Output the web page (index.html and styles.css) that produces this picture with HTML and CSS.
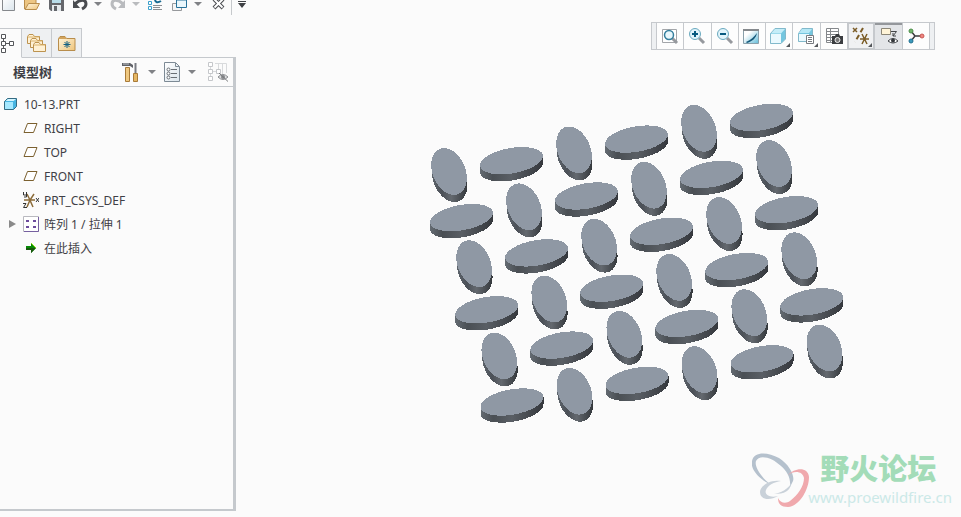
FILE: index.html
```html
<!DOCTYPE html>
<html lang="zh-CN">
<head>
    <meta charset="UTF-8">
    <meta name="viewport" content="width=device-width, initial-scale=1.0">
    <title>10-13.PRT</title>
    <link rel="stylesheet" href="styles.css">
</head>
<body>
    <div class="app">
        <header class="quickbar">
            <button class="tool" aria-label="新建"><svg width="16" height="12" viewBox="0 0 16 12"><defs><linearGradient id="paper" x2="1" y2="1"><stop offset="0" stop-color="#fff"/><stop offset="1" stop-color="#dbe5ec"/></linearGradient></defs><path d="M2.500-2V10.500H14.500V-2" fill="url(#paper)" stroke="#85888c"/></svg></button>
            <button class="tool" aria-label="打开"><svg width="16" height="12" viewBox="0 0 16 12"><defs><linearGradient id="folder" x2="1" y2="1"><stop offset="0" stop-color="#fff6df"/><stop offset="1" stop-color="#efc57c"/></linearGradient></defs><path d="M.5 9V-2H12V3" fill="#edc683" stroke="#b88d4c"/><path d="M1 9.500L4.500 3.500H15.500L12.500 9.500Z" fill="url(#folder)" stroke="#b88d4c"/></svg></button>
            <button class="tool" aria-label="保存"><svg width="16" height="12" viewBox="0 0 16 12"><path d="M1-2H16V11H3L1 9Z" fill="#65676c"/><path d="M4-1H13V3H4Z" fill="#b8dce9"/><path d="M4 5H13V11H4Z" fill="#e5e9ed"/><path d="M6 6H9V11H6Z" fill="#63666b"/></svg></button>
            <button class="tool" aria-label="撤消"><svg width="16" height="12" viewBox="0 0 16 12"><path d="M3 4C8-1 14-1 14 4C14 7 12 8 10 9" fill="none" stroke="#4a4c50" stroke-width="3"/><path d="M1 0V8H8Z" fill="#4a4c50"/></svg></button>
            <button class="drop" aria-label="撤消列表"><svg width="8" height="4"><path d="M0 0H8L4 4Z"/></svg></button>
            <button class="tool" aria-label="重做"><svg width="16" height="12" viewBox="0 0 16 12"><path d="M13 4C8-1 2-1 2 4C2 7 4 8 6 9" fill="none" stroke="#b9bbbe" stroke-width="3"/><path d="M15 0V8H8Z" fill="#b9bbbe"/></svg></button>
            <button class="drop drop-off" aria-label="重做列表"><svg width="8" height="4"><path d="M0 0H8L4 4Z"/></svg></button>
            <button class="tool" aria-label="重新生成"><svg width="16" height="12" viewBox="0 0 16 12"><path d="M.5 1.500H3.500V4.500H.5ZM.5 6.500H3.500V9.500H.5Z" fill="#fff" stroke="#3aa0cc"/><path d="M5 5.500H14M5 9.500H14M5 7.500H12" stroke="#8b8e92"/><path d="M7-1C7 3 10 3 13 1" fill="none" stroke="#196b92" stroke-width="2"/></svg></button>
            <button class="tool" aria-label="窗口"><svg width="16" height="12" viewBox="0 0 16 12"><path d="M.5 3.500H9.500V10.500H.5Z" fill="#f5f5f5" stroke="#97999c"/><path d="M4.500-2H14.500V7.500H4.500Z" fill="#eaf7fc" stroke="#28729a" stroke-width="1"/><path d="M4 0H15" stroke="#28729a"/></svg></button>
            <button class="drop" aria-label="窗口列表"><svg width="8" height="4"><path d="M0 0H8L4 4Z"/></svg></button>
            <button class="tool" aria-label="关闭"><svg width="16" height="12" viewBox="0 0 16 12"><path d="M4-1L13 8M13-1L4 8" stroke="#4a4c50" stroke-width="4"/><path d="M4-1L12.500 7.500M13-1L4.500 7.500" stroke="#fff" stroke-width="2"/></svg></button>
            <span class="divider"></span>
            <button class="drop drop-more" aria-label="自定义"><svg width="8" height="7"><path d="M0 0H8V1H0ZM0 2H8L4 7Z"/></svg></button>
        </header>

        <main class="workspace">
            <aside class="navigator">
                <div class="tabs">
                    <button class="tab active" aria-label="模型树"><svg width="14" height="20" viewBox="0 0 14 20"><path d="M3.500 5V15M3 10.500H9" stroke="#55575a" fill="none"/><path d="M1.500 1.500H5.500V5.500H1.500ZM1.500 8.500H5.500V12.500H1.500ZM1.500 15.500H5.500V19.500H1.500ZM9.500 8.500H13.500V12.500H9.500Z" fill="#fff" stroke="#55575a"/></svg></button>
                    <button class="tab" aria-label="文件夹浏览器"><svg width="20" height="20" viewBox="0 0 20 20"><defs><g id="fold"><path d="M.5 9.500V2.500L2 .5H6L7.500 2.500H12.500V9.500Z" fill="#fff1d4" stroke="#bd934f"/><path d="M1 3H12" stroke="#dcb46c"/></g></defs><use href="#fold" x="0" y="1"/><use href="#fold" x="3" y="5"/><use href="#fold" x="6" y="9"/></svg></button>
                    <button class="tab" aria-label="收藏夹"><svg width="18" height="18" viewBox="0 0 18 18"><path d="M.5 16.500V4.500L2 2.500H7L8.500 4.500H17V16.500Z" fill="url(#folder)" stroke="#b88d4c"/><path d="M1 4H8" stroke="#d1a35c" stroke-width="2"/><path d="M9 7V14M5.500 10.500H12.500M6.500 8L11.500 13M11.500 8L6.500 13" stroke="#136184"/></svg></button>
                </div>
                <section class="panel">
                    <div class="panel-head">
                        <h1>模型树</h1>
                        <div class="panel-tools">
                            <button class="wide" aria-label="设置"><svg width="18" height="20" viewBox="0 0 18 20"><path d="M0 1H8L11 3V6L8 4H0Z" fill="#606268"/><path d="M1 2H7" stroke="#c1c5ca"/><path d="M3.500 5.500H7.500V19.500H3.500Z" fill="#efc880" stroke="#a97b38"/><path d="M13.500 1V11" stroke="#787b82" stroke-width="2"/><path d="M11.500 11.500H15.500V19.500H11.500Z" fill="#e5b765" stroke="#a97b38"/></svg></button>
                            <button class="drop" aria-label="设置列表"><svg width="8" height="4"><path d="M0 0H8L4 4Z"/></svg></button>
                            <button class="tool" aria-label="显示"><svg width="16" height="20" viewBox="0 0 16 20"><path d="M.5.5H11.500L15.500 4.500V19.500H.5Z" fill="url(#paper)" stroke="#7d8a95"/><path d="M11.500 1V4.500H15" fill="none" stroke="#7d8a95"/><path d="M7 7.500H13M7 11.500H13M7 15.500H13" stroke="#696f75"/><g fill="#fff" stroke="#696f75"><circle cx="4.500" cy="7.500" r="1.500"/><circle cx="4.500" cy="11.500" r="1.500"/><circle cx="4.500" cy="15.500" r="1.500"/></g></svg></button>
                            <button class="drop" aria-label="显示列表"><svg width="8" height="4"><path d="M0 0H8L4 4Z"/></svg></button>
                            <button class="wide last" aria-label="隐藏项"><svg width="21" height="20" viewBox="0 0 21 20"><path d="M2.500 5V15M3 9.500H8M7 1.500H18.500V11M10.500 2V7M14.500 2V12" fill="none" stroke="#d8dadc"/><path d="M.5.5H4.500V4.500H.5ZM.5 7.500H4.500V11.500H.5ZM.5 14.500H4.500V18.500H.5ZM8.500 7.500H12.500V11.500H8.500Z" fill="#fff" stroke="#c5c7ca"/><path d="M10 15Q15 10 20 15Q15 20 10 15Z" fill="#dcdddf" stroke="#8b8d90"/><circle cx="15" cy="15" r="2" fill="#85878a"/><path d="M11 11L20 19.500" stroke="#77797c"/></svg></button>
                        </div>
                    </div>
                    <ul class="tree">
                        <li>
                            <div class="node root"><svg width="16" height="16" viewBox="0 0 16 16"><path d="M1.500 5.500L4.500 2.500H13.500V10.500L10.500 13.500H1.500Z" fill="#47b5e2" stroke="#356b82"/><path d="M2 6H10V13H2Z" fill="#a5e8ff"/><path d="M2.500 5L5 3H13L10.500 5Z" fill="#d4f5ff"/></svg><span>10-13.PRT</span></div>
                            <ul>
                                <li class="node"><svg width="16" height="16" viewBox="0 0 16 16"><path d="M4.500 3.500H14L10.500 12.500H1Z" fill="#fff" stroke="#7b602f"/></svg><span>RIGHT</span></li>
                                <li class="node"><svg width="16" height="16" viewBox="0 0 16 16"><path d="M4.500 3.500H14L10.500 12.500H1Z" fill="#fff" stroke="#7b602f"/></svg><span>TOP</span></li>
                                <li class="node"><svg width="16" height="16" viewBox="0 0 16 16"><path d="M4.500 3.500H14L10.500 12.500H1Z" fill="#fff" stroke="#7b602f"/></svg><span>FRONT</span></li>
                                <li class="node"><svg width="16" height="16" viewBox="0 0 16 16"><path d="M1 8H12M4 2L6 6L10 15M11 2L7 8L4 15" fill="none" stroke="#8b6b39" stroke-width="1.500"/><path d="M.5 0V3H3M3.500 0V5H1M0 11.500H3L.5 15.500H4M13 6L16 10M16 6L13 10" fill="none" stroke="#343434"/></svg><span>PRT_CSYS_DEF</span></li>
                                <li class="node expandable"><button class="toggle" aria-label="展开"><svg width="8" height="10"><path d="M1 1L8 5L1 9Z"/></svg></button><svg width="16" height="16" viewBox="0 0 16 16"><path d="M.5.5H15.500V15.500H.5Z" fill="#fff" stroke="#b9b9bf"/><path d="M1 15.500H15.500V1" fill="none" stroke="#7660a0"/><path d="M3 4H6V6H3ZM10 4H13V6H10ZM3 10H6V12H3ZM10 10H13V12H10Z" fill="#6c4b9c"/></svg><span>阵列 1 / 拉伸 1</span></li>
                                <li class="node"><svg width="16" height="16" viewBox="0 0 16 16"><path d="M3 6H8V3L13 8L8 13V10H3Z" fill="#078a07"/><path d="M3 8H13L8 13V10H3Z" fill="#17570d"/><path d="M8 3L13 8" stroke="#8bd914"/></svg><span>在此插入</span></li>
                            </ul>
                        </li>
                    </ul>
                </section>
            </aside>

            <section class="viewport">
                <svg class="model" width="420" height="325" viewBox="0 0 420 325" role="img" aria-label="阵列">
                    <defs>
                        <linearGradient id="sideTall"><stop offset="0" stop-color="#5f666e"/><stop offset=".3" stop-color="#4b5057"/><stop offset=".55" stop-color="#64696f"/><stop offset="1" stop-color="#34383c"/></linearGradient>
                        <linearGradient id="sideFlat"><stop offset="0" stop-color="#646b72"/><stop offset=".2" stop-color="#4a4f54"/><stop offset=".5" stop-color="#5a5f65"/><stop offset="1" stop-color="#35383d"/></linearGradient>
                        <g id="tall">
                            <path d="M-17.850-6.500L-17.200.6A24.400 16.400 67.300 0 0 18.500 13.600L17.850 6.500Z" fill="url(#sideTall)"/>
                            <ellipse rx="24.400" ry="16.400" transform="rotate(67.300)" fill="#8f98a4"/>
                        </g>
                        <g id="flat">
                            <path d="M-31.500 4.650V11.650A31.900 12.700-10 0 0 31.500 2.350V-4.650Z" fill="url(#sideFlat)"/>
                            <ellipse rx="31.900" ry="12.700" transform="rotate(-10)" fill="#8f98a4"/>
                        </g>
                        <g id="oddRow">
                            <use href="#tall"/>
                            <use href="#flat" x="62.500" y="-10.800"/>
                            <use href="#tall" x="125" y="-21.600"/>
                            <use href="#flat" x="187.500" y="-32.400"/>
                            <use href="#tall" x="250" y="-43.200"/>
                            <use href="#flat" x="312.500" y="-54"/>
                        </g>
                        <g id="evenRow">
                            <use href="#flat"/>
                            <use href="#tall" x="62.500" y="-10.800"/>
                            <use href="#flat" x="125" y="-21.600"/>
                            <use href="#tall" x="187.500" y="-32.400"/>
                            <use href="#flat" x="250" y="-43.200"/>
                            <use href="#tall" x="312.500" y="-54"/>
                        </g>
                    </defs>
                    <g shape-rendering="crispEdges">
                        <use href="#oddRow" x="21" y="71.500"/>
                        <use href="#evenRow" x="33.500" y="117.600"/>
                        <use href="#oddRow" x="46.100" y="163.700"/>
                        <use href="#evenRow" x="58.700" y="209.800"/>
                        <use href="#oddRow" x="71.300" y="255.900"/>
                        <use href="#evenRow" x="84" y="302"/>
                    </g>
                </svg>

                <div class="viewbar">
                    <span class="grip"></span>
                    <button aria-label="重新调整"><svg width="18" height="18" viewBox="0 0 18 18"><path d="M1.500 2.500H15.500V15.500H1.500Z" fill="#fff" stroke="#a3a6aa"/><path d="M11 11L16 16" stroke="#96999e" stroke-width="3"/><circle cx="8" cy="8" r="4.500" fill="#e8f7fc" stroke="#357f9e" stroke-width="1.500"/></svg></button>
                    <button aria-label="放大"><svg width="18" height="18" viewBox="0 0 18 18"><path d="M11 11L16 16" stroke="#96999e" stroke-width="3"/><circle cx="7" cy="7" r="5.500" fill="#e1f4fb" stroke="#6aa9bf"/><path d="M4 7H10M7 4V10" stroke="#075a80" stroke-width="2"/></svg></button>
                    <button aria-label="缩小"><svg width="18" height="18" viewBox="0 0 18 18"><path d="M11 11L16 16" stroke="#96999e" stroke-width="3"/><circle cx="7" cy="7" r="5.500" fill="#e1f4fb" stroke="#6aa9bf"/><path d="M4 7H10" stroke="#075a80" stroke-width="2"/></svg></button>
                    <button aria-label="重画"><svg width="18" height="18" viewBox="0 0 18 18"><defs><linearGradient id="sky" x2="1" y2="1"><stop offset=".3" stop-color="#fff"/><stop offset="1" stop-color="#63bcd9"/></linearGradient></defs><path d="M.5 2.500H15.500V16.500H.5Z" fill="url(#sky)" stroke="#8aa0ab"/><path d="M0 3H16" stroke="#85898d" stroke-width="2"/><path d="M14 6C13 11 10 14 4 16L3 15C8 13 11 10 14 6Z" fill="#15597a"/></svg></button>
                    <button class="menu" aria-label="显示样式"><svg width="18" height="18" viewBox="0 0 18 18"><path d="M.5 6.500L5 1.500H15.500V12L11 16.500H.5Z" fill="#74c6df" stroke="#82b9cb"/><path d="M1 7H11V16H1Z" fill="#eaf9fe"/><path d="M1 6.500L5 2H15L11 6.500Z" fill="#c4edf8"/></svg></button>
                    <button class="menu" aria-label="已保存方向"><svg width="18" height="18" viewBox="0 0 18 18"><path d="M.5 6.500L4 1.500H14.500V12L11 14.500H.5Z" fill="#74c6df" stroke="#82b9cb"/><path d="M1 7H11V14H1Z" fill="#eaf9fe"/><path d="M1 6L4 2H14L11 6Z" fill="#b5e8f6"/><path d="M8.500 8.500H15.500V16.500H8.500Z" fill="#fff" stroke="#777b80"/><path d="M10 10.500H14M10 12.500H14M10 14.500H14" stroke="#777b80"/></svg></button>
                    <button aria-label="视图管理器"><svg width="18" height="18" viewBox="0 0 18 18"><path d="M1.500 1.500H13.500V15.500H1.500Z" fill="#fff" stroke="#85888c"/><path d="M1 4.500H13M1 7.500H13M1 10.500H13M1 13.500H13M5.500 2V15" stroke="#85888c"/><path d="M7 9H10L11 7H14L15 9H18V17H7Z" fill="#3b3d40"/><circle cx="12.500" cy="13" r="2.500" fill="#777" stroke="#f0f0f0"/></svg></button>
                    <button class="menu pressed" aria-label="基准显示"><svg width="18" height="18" viewBox="0 0 18 18"><path d="M1 1L5 5M5 1L1 5" stroke="#7b5c27" stroke-width="1.500"/><path d="M11 1L3 15" stroke="#7b5c27" stroke-width="2" stroke-dasharray="5 3"/><path d="M8 12H17M10 7L15 17M15 7L10 17" stroke="#7b5c27" stroke-width="1.500"/></svg></button>
                    <button class="pressed dark" aria-label="注释显示"><svg width="18" height="18" viewBox="0 0 18 18"><path d="M1.500 1.500H10.500V7.500H1.500Z" fill="#fff4d8" stroke="#8b8677"/><path d="M11 4.500H16.500L13 9M13 6V9H16" fill="none" stroke="#444649"/><path d="M8 14Q13 9 18 14Q13 18 8 14Z" fill="#fff" stroke="#3f4246"/><circle cx="13" cy="13.500" r="2" fill="#33363a"/></svg></button>
                    <button aria-label="旋转中心"><svg width="18" height="18" viewBox="0 0 18 18"><path d="M4 4L8 9L4 14M8 9H14" fill="none" stroke="#393b3e" stroke-width="1.500"/><circle cx="4" cy="4" r="2" fill="#72b56c" stroke="#4c8e49"/><circle cx="4" cy="14" r="2" fill="#3c9abc" stroke="#206f90"/><circle cx="15" cy="9" r="2" fill="#ee8580" stroke="#c85752"/></svg></button>
                    <span class="grip"></span>
                </div>

                <div class="watermark">
                    <svg width="60" height="58" viewBox="0 0 60 58" aria-hidden="true">
                        <path fill="#b5c1cd" d="M18 33C6 28-2 17 0 10C2 0 16 1 27 7C37 13 43 25 41 30L38 36C39 27 35 20 29 15C20 6 7 3 4 10C2 16 10 27 18 33Z"/>
                        <path fill="#f0a9ad" d="M36 24C42 17 56 15 57 26C57 38 48 55 36 56C29 56 26 53 26 47C28 52 34 53 38 50C46 44 52 35 52 27C51 20 42 19 36 24Z"/>
                        <path fill="#c9d1d9" d="M29 30C18 28 8 35 8 41C8 49 18 50 26 45C18 47 12 44 14 39C16 34 22 31 29 30ZM39 32C37 38 28 42 22 43C32 43 39 40 39 32Z"/>
                    </svg>
                    <div class="watermark-text">
                        <strong>野火论坛</strong>
                        <span>www.proewildfire.cn</span>
                    </div>
                </div>
            </section>
        </main>
    </div>
</body>
</html>
```

FILE: styles.css
```css
* {
    box-sizing: border-box;
}

body {
    margin: 0;
    background-color: #fbfbfb;
    color: #3f3f46;
    font-family: "Noto Sans", "Noto Sans CJK SC", sans-serif;
    font-size: 12px;
}

button {
    padding: 0;
    border: none;
    background: none;
    cursor: pointer;
}

svg {
    display: block;
    flex: none;
}

ul {
    margin: 0;
    padding: 0;
    list-style: none;
}

.app {
    display: flex;
    flex-direction: column;
    height: 100vh;
    overflow: hidden;
}

/* Quick access toolbar */
.quickbar {
    display: flex;
    gap: 8px;
    height: 15px;
}

.tool {
    width: 16px;
}

.quickbar .tool svg {
    margin-bottom: 3px;
}

.drop {
    width: 8px;
    fill: #808286;
}

.quickbar .drop {
    margin-left: -2px;
    padding-bottom: 7px;
}

.drop-off {
    fill: #b9bbbe;
}

.drop-more {
    fill: #3f4145;
}

.divider {
    width: 1px;
    margin-left: -3px;
    background-color: #c6c9cc;
}

.workspace {
    display: flex;
    flex: 1;
    min-height: 0;
}

/* Navigator */
.navigator {
    display: flex;
    flex-direction: column;
    width: 236px;
    padding: 13px 0 6px;
}

.tabs {
    display: flex;
    height: 30px;
    position: relative;
}

.tab {
    display: flex;
    align-items: center;
    justify-content: center;
    width: 30px;
    border: 1px solid #c6c9cd;
    border-left: none;
    background-color: #eef0f2;
}

.tab.active {
    justify-content: flex-start;
    width: 22px;
    border-bottom-color: #fbfbfb;
    background-color: #fbfbfb;
}

.panel {
    flex: 1;
    margin-top: -1px;
    border: solid #c5c9cd;
    border-width: 1px 3px 2px 0;
}

.panel-head {
    display: flex;
    align-items: center;
    justify-content: space-between;
    height: 29px;
    padding: 0 4px 0 13px;
    border-bottom: 1px solid #c5c9cd;
}

.panel-head h1 {
    margin: 0;
    font-size: 13px;
    line-height: 18px;
}

.panel-tools {
    display: flex;
    align-items: center;
    gap: 8px;
}

.panel-tools .last {
    margin-left: 4px;
}

.tree {
    padding-top: 5px;
}

.node {
    display: flex;
    align-items: center;
    gap: 5px;
    height: 24px;
    padding-left: 23px;
}

.node.root {
    padding-left: 3px;
}

.node.expandable {
    padding-left: 8px;
}

.toggle {
    width: 10px;
    fill: #8a8a8a;
}

/* Graphics area */
.viewport {
    position: relative;
    flex: 1;
    min-width: 0;
}

.model {
    position: absolute;
    top: 85px;
    left: 192px;
}

.viewbar {
    position: absolute;
    top: 7px;
    right: 26px;
    display: flex;
    width: 284px;
    height: 28px;
    border: 1px solid #c6c9cd;
}

.grip {
    width: 4px;
    background-color: #eef0f2;
}

.viewbar button {
    position: relative;
    display: flex;
    align-items: center;
    justify-content: center;
    flex: 1;
    border-left: 1px solid #c6c9cd;
    background-color: #fdfdfd;
}

.viewbar button:nth-last-child(2) {
    border-right: 1px solid #c6c9cd;
}

.viewbar .menu::after {
    content: "";
    position: absolute;
    right: 2px;
    bottom: 2px;
    border-left: 4px solid transparent;
    border-bottom: 4px solid #55585c;
}

.viewbar .pressed {
    background-color: #f0f1f3;
    box-shadow: inset 0 0 0 1px #c6c9cd;
}

.viewbar .dark {
    background-color: #e3e5e8;
    box-shadow: inset 0 2px 0 #94979b;
}

.watermark {
    position: absolute;
    right: 9px;
    bottom: 8px;
    display: flex;
    align-items: flex-end;
}

.watermark-text {
    display: flex;
    flex-direction: column;
    margin-left: -4px;
}

.watermark strong {
    padding-left: 12px;
    color: #a3dcb8;
    font-family: "Liberation Sans", "Noto Sans CJK SC", sans-serif;
    font-size: 29px;
    font-weight: 900;
    line-height: 30px;
}

.watermark span {
    color: #cce9e8;
    font-size: 15px;
    line-height: 24px;
}
```
